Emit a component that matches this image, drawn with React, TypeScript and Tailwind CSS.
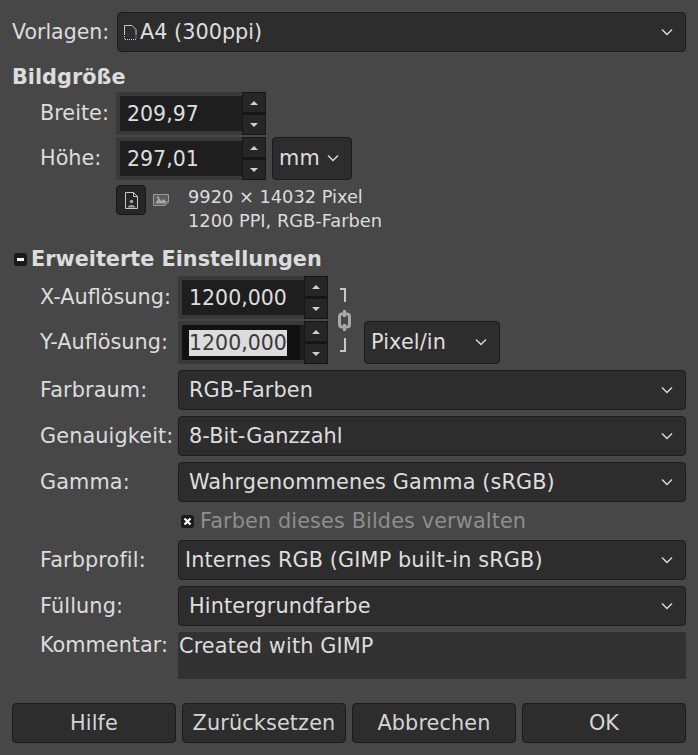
import React from "react";

const Chevron = () => (
  <svg width="12" height="8" viewBox="0 0 12 8" className="shrink-0">
    <path d="M1 1.5 L6 6.5 L11 1.5" fill="none" stroke="#dcdcdc" strokeWidth="1.4" />
  </svg>
);

const Combo = ({ text, pl = "pl-[10px]", className = "" }: { text: string; pl?: string; className?: string }) => (
  <div className={`h-10 flex items-center justify-between ${pl} pr-3 bg-[#2d2d2d] border border-[#1c1c1c] rounded-[4px] text-[#dedede] ${className}`}>
    <span>{text}</span>
    <Chevron />
  </div>
);

const Arrow = ({ up }: { up: boolean }) => (
  <svg width="8" height="4" viewBox="0 0 8 4">
    <path d={up ? "M4 0 L8 4 L0 4 Z" : "M0 0 L8 0 L4 4 Z"} fill="#cfcfcf" />
  </svg>
);

const Spin = ({ value, selected = false }: { value: string; selected?: boolean }) => (
  <div className="w-[150px] h-[43px] flex bg-[#393939]">
    <div className="flex-1 pl-1 py-1">
      <div className="h-[35px] bg-[#1e1e1e]">
        <div className={`h-[35px] flex items-center pl-[7px] text-[20.5px] tracking-normal ${selected ? "bg-[#111111] mr-[4px]" : ""}`}>
          <span className={selected ? "bg-[#dcdcdc] text-[#3a3a3a] leading-[26px] h-[26px]" : "text-[#dedede]"}>{value}</span>
        </div>
      </div>
    </div>
    <div className="w-6 flex flex-col">
      <div className="h-[21px] flex items-center justify-center bg-[#262626] border border-[#161616]">
        <Arrow up />
      </div>
      <div className="h-[22px] flex items-center justify-center bg-[#262626] border border-[#161616] border-t-2">
        <Arrow up={false} />
      </div>
    </div>
  </div>
);

const Label = ({ text, className = "" }: { text: string; className?: string }) => (
  <div className={`text-[#dcdcdc] ${className}`}>{text}</div>
);

const Row = ({ label, text, pl }: { label: string; text: string; pl?: string }) => (
  <div className="flex items-center pl-[28px]">
    <Label text={label} className="w-[138px] shrink-0" />
    <Combo text={text} pl={pl} className="flex-1" />
  </div>
);

const DocIcon = () => (
  <svg width="13" height="17" viewBox="0 0 13 17" fill="none">
    <path d="M0.5 0.5 H8.5 L12.5 4.5 V16.5 H0.5 Z" stroke="#c8c8c8" />
    <path d="M8.5 0.5 V4.5 H12.5" stroke="#c8c8c8" />
    <circle cx="6.5" cy="9.5" r="1.8" fill="#a0a0a0" />
    <path d="M2.5 15.5 C3 12 10 12 10.5 15.5 Z" fill="#a0a0a0" />
  </svg>
);

const LandscapeIcon = () => (
  <svg width="16" height="12" viewBox="0 0 16 12" fill="none">
    <path d="M0.5 0.5 H15.5 V8 L12 11.5 H0.5 Z" fill="#5c5c5c" stroke="#9a9a9a" />
    <path d="M2 9.5 L6 4 L8.5 7 L10.5 5 L13.5 8 L11 9.5 Z" fill="#a8a8a8" />
    <circle cx="5" cy="3.5" r="1.2" fill="#a8a8a8" />
    <path d="M15.5 8 H12 V11.5" stroke="#9a9a9a" />
  </svg>
);

const TemplateIcon = () => (
  <svg width="13" height="15" viewBox="0 0 13 15" fill="none" className="shrink-0">
    <path d="M0.5 10 V0.5 H8 L12 4.5 V10" stroke="#c8c8c8" />
    <path d="M0.5 11 V14.5 H12 V11" stroke="#c8c8c8" strokeDasharray="1 1" />
  </svg>
);

const ChainIcon = () => (
  <svg width="16" height="66" viewBox="0 0 16 66" fill="none" className="block">
    <path d="M3 1 H8 V14" stroke="#c8c8c8" strokeWidth="2" />
    <path d="M3 63 H8 V50" stroke="#c8c8c8" strokeWidth="2" />
    <rect x="2.5" y="26" width="10" height="13" rx="2.5" stroke="#a8a8a8" strokeWidth="3" />
    <path d="M7.5 22 V29 M7.5 36 V43" stroke="#a8a8a8" strokeWidth="3" />
  </svg>
);

const Button = ({ text }: { text: string }) => (
  <div className="flex-1 h-10 flex items-center justify-center bg-[#2d2d2d] border border-[#1c1c1c] rounded-[4px] text-[#d4d4d4]">
    {text}
  </div>
);

export default function App() {
  return (
    <div
      className="w-[698px] h-[755px] bg-[#474747] px-3 pt-3 text-[20.8px] leading-[24px] tracking-[0.12px] overflow-hidden"
      style={{ fontFamily: '"DejaVu Sans", sans-serif' }}
    >
      <div className="flex items-center">
        <Label text="Vorlagen:" className="w-[105px] shrink-0 tracking-normal text-[20.5px]" />
        <div className="flex-1 h-10 flex items-center justify-between pl-[6px] pr-3 bg-[#2d2d2d] border border-[#1c1c1c] rounded-[4px] text-[#dedede] tracking-normal">
          <span className="flex items-center gap-[3px]">
            <TemplateIcon />
            A4 (300ppi)
          </span>
          <Chevron />
        </div>
      </div>

      <div className="mt-[13px] font-bold tracking-normal text-[#dcdcdc]">Bildgröße</div>

      <div className="mt-[3px] pl-[28px] flex flex-col gap-[2px]">
        <div className="flex items-center">
          <Label text="Breite:" className="w-[76px] shrink-0 -mt-[2px] tracking-normal" />
          <Spin value="209,97" />
        </div>
        <div className="flex items-center">
          <Label text="Höhe:" className="w-[76px] shrink-0 -mt-[2px] tracking-normal" />
          <Spin value="297,01" />
          <div className="ml-[6px] w-[80px] h-[43px] flex items-center gap-[7px] pl-[6px] pb-[2px] bg-[#2d2d2d] border border-[#1c1c1c] rounded-[4px] text-[#dedede]">
            mm
            <Chevron />
          </div>
        </div>
      </div>

      <div className="mt-[5px] ml-[104px] flex">
        <div className="w-[30px] h-[30px] flex items-center justify-center bg-[#262626] border border-[#161616] rounded-[4px]">
          <DocIcon />
        </div>
        <div className="ml-[7px] mt-[9px]">
          <LandscapeIcon />
        </div>
        <div className="ml-[19px] text-[17.8px] leading-[24px] tracking-normal text-[#dcdcdc]">
          <div>9920 × 14032 Pixel</div>
          <div>1200 PPI, RGB-Farben</div>
        </div>
      </div>

      <div className="mt-[14px] flex items-center pl-[2px] font-bold tracking-normal text-[#dcdcdc]">
        <div className="w-[13px] h-[13px] rounded-[3px] bg-[#1a1a1a] flex items-center justify-center mr-[4px]">
          <div className="w-[7px] h-[3px] bg-white" />
        </div>
        Erweiterte Einstellungen
      </div>

      <div className="mt-[5px] flex pl-[28px]">
        <div className="w-[138px] shrink-0 flex flex-col gap-[2px]">
          <div className="h-[41px] flex items-center"><Label text="X-Auflösung:" className="tracking-normal" /></div>
          <div className="h-[45px] flex items-center"><Label text="Y-Auflösung:" className="tracking-normal" /></div>
        </div>
        <div className="flex flex-col gap-[2px]">
          <Spin value="1200,000" />
          <Spin value="1200,000" selected />
        </div>
        <div className="ml-[9px] mt-[12px]">
          <ChainIcon />
        </div>
        <div className="ml-[11px] mt-[45px] w-[136px] h-[43px] flex items-center justify-between pl-[6px] pr-[12px] pb-[2px] bg-[#2d2d2d] border border-[#1c1c1c] rounded-[4px] text-[#dedede]">
          Pixel/in
          <Chevron />
        </div>
      </div>

      <div className="mt-[6px] flex flex-col gap-[6px]">
        <Row label="Farbraum:" text="RGB-Farben" />
        <Row label="Genauigkeit:" text="8-Bit-Ganzzahl" />
        <Row label="Gamma:" text="Wahrgenommenes Gamma (sRGB)" />
      </div>

      <div className="mt-[7px] ml-[169px] flex items-center h-[24px] text-[#8e8e8e]">
        <div className="w-[13px] h-[13px] rounded-[3px] bg-[#1a1a1a] flex items-center justify-center mr-[6px]">
          <svg width="9" height="9" viewBox="0 0 9 9">
            <path d="M1.5 1.5 L7.5 7.5 M7.5 1.5 L1.5 7.5" stroke="#ffffff" strokeWidth="2.2" />
          </svg>
        </div>
        Farben dieses Bildes verwalten
      </div>

      <div className="mt-[7px] flex flex-col gap-[6px]">
        <Row label="Farbprofil:" text="Internes RGB (GIMP built-in sRGB)" pl="pl-[6px]" />
        <Row label="Füllung:" text="Hintergrundfarbe" />
      </div>

      <div className="mt-[6px] flex pl-[28px]">
        <Label text="Kommentar:" className="w-[138px] shrink-0 pt-[1px] tracking-normal" />
        <div className="flex-1 h-[47px] bg-[#323232] rounded-[2px] pl-[1px] pt-[2px] text-[#dcdcdc]">Created with GIMP</div>
      </div>

      <div className="mt-[24px] flex gap-[6px]">
        <Button text="Hilfe" />
        <Button text="Zurücksetzen" />
        <Button text="Abbrechen" />
        <Button text="OK" />
      </div>
    </div>
  );
}
